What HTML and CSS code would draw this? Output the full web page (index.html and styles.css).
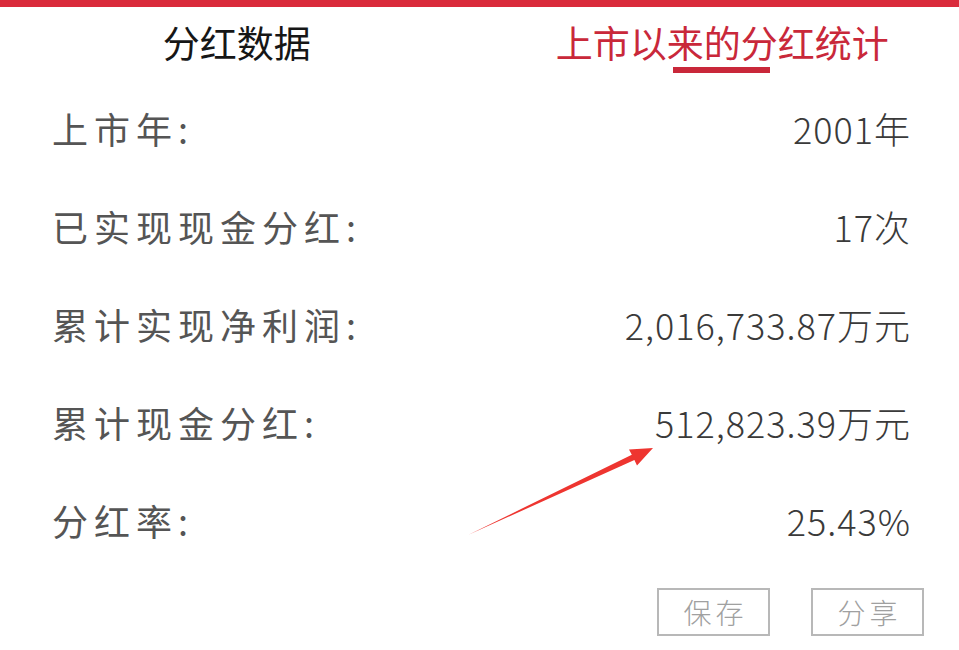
FILE: index.html
```html
<!DOCTYPE html>
<html lang="zh-CN">
<head>
<meta charset="utf-8">
<title>分红数据</title>
<link rel="stylesheet" href="styles.css">
</head>
<body>
<div class="page">
  <div class="topbar"></div>
  <div class="tabs">
    <div class="tab">分红数据</div>
    <div class="tab active">上市以来的分红统计<span class="underline"></span></div>
  </div>
  <div class="rows">
    <div class="row"><span class="label">上市年:</span><span class="value">2001年</span></div>
    <div class="row"><span class="label">已实现现金分红:</span><span class="value">17次</span></div>
    <div class="row"><span class="label">累计实现净利润:</span><span class="value">2,016,733.87万元</span></div>
    <div class="row"><span class="label">累计现金分红:</span><span class="value">512,823.39万元</span></div>
    <div class="row"><span class="label">分红率:</span><span class="value">25.43%</span></div>
  </div>
  <div class="actions">
    <div class="btn">保存</div>
    <div class="btn">分享</div>
  </div>
  <svg class="arrow" width="959" height="650" viewBox="0 0 959 650">
    <polygon points="468,535 634.4,460.1 637,465.5 653,448 629,449.5 631.8,454.7" fill="#ee3530"/>
  </svg>
</div>
</body>
</html>
```

FILE: styles.css
```css
* { box-sizing: border-box; }
html, body { margin: 0; padding: 0; background: #fff; }
body {
  font-family: "Noto Sans CJK SC", "Noto Sans", sans-serif;
  width: 959px;
  height: 650px;
  overflow: hidden;
}
.page { position: relative; width: 959px; height: 650px; }
.topbar { height: 7px; background: #da2a3b; }
.tabs {
  display: grid;
  grid-template-columns: 1fr 1fr;
  height: 72px;
}
.tab {
  position: relative;
  text-align: center;
  font-size: 37px;
  line-height: 37px;
  padding-top: 17px;
  color: #161616;
}
.tab:first-child { padding-right: 6px; }
.tab.active { color: #c9283a; padding-left: 6px; }
.underline {
  position: absolute;
  left: 50%;
  margin-left: -46px;
  top: 60px;
  width: 97px;
  height: 6px;
  background: #c9283a;
}
.rows { padding: 0 48px 0 52px; }
.row {
  height: 98px;
  display: flex;
  align-items: center;
  justify-content: space-between;
}
.label {
  font-size: 36px;
  letter-spacing: 6px;
  color: #555;
}
.value {
  font-size: 36px;
  font-weight: 300;
  letter-spacing: 1px;
  color: #3a3a3a;
}
.actions {
  display: flex;
  justify-content: flex-end;
  gap: 41px;
  padding-right: 35px;
  margin-top: 19px;
}
.btn {
  width: 113px;
  height: 48px;
  border: 2px solid #b8b8b8;
  color: #a0a0a0;
  font-size: 28px;
  font-weight: 300;
  letter-spacing: 4px;
  display: flex;
  align-items: center;
  justify-content: center;
  padding-left: 4px;
}
.arrow { position: absolute; left: 0; top: 0; pointer-events: none; }
```
